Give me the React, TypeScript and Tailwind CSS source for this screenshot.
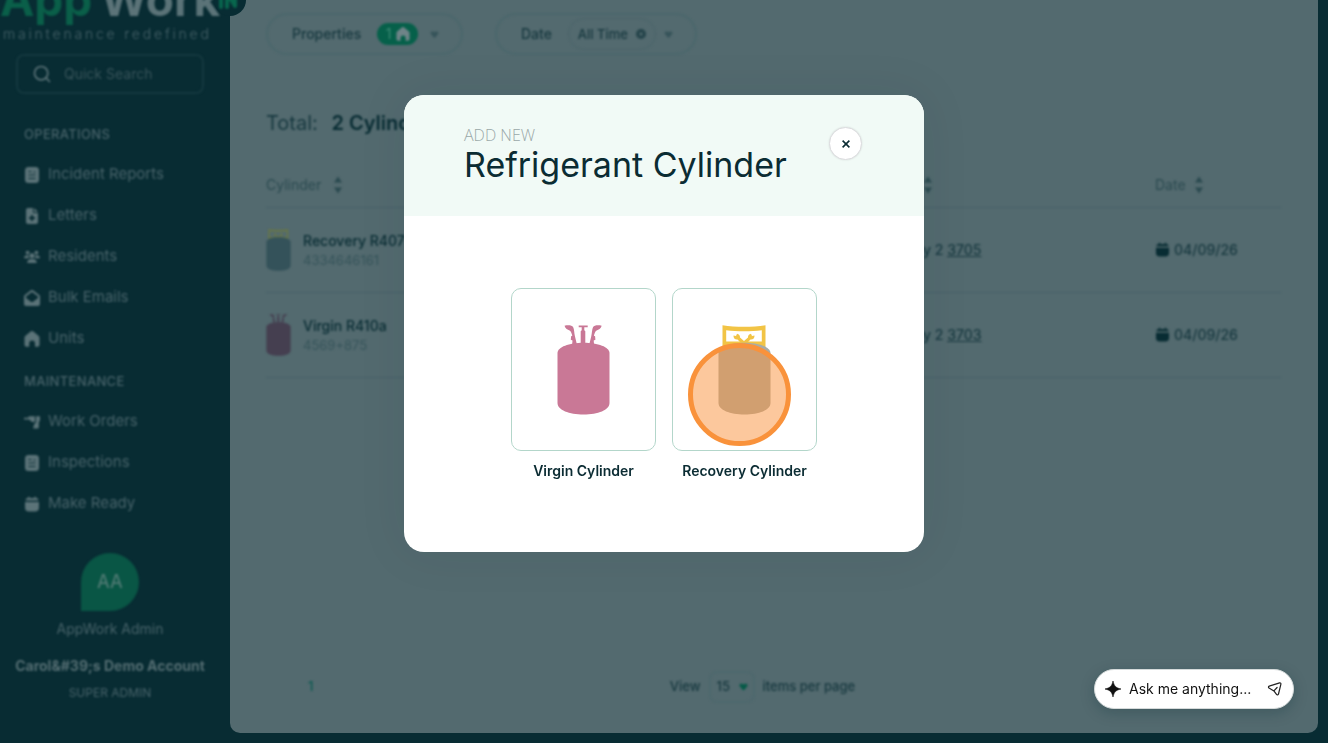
import React from 'react';
import { FaFileMedical, FaEnvelopeOpen } from 'react-icons/fa6';
import { Search } from 'lucide-react';

type IconProps = { className?: string };

function ReportIcon({ className }: IconProps) {
  return (
    <svg viewBox="0 0 16 16" className={className} aria-hidden="true">
      <rect x="1" y="0" width="14" height="16" rx="3.5" fill="currentColor" />
      <path d="M4.5 4.500h3M4.500 8h7M4.500 11.500h7M9.500 5h2" stroke="#082c33" strokeWidth="1.200" />
    </svg>
  );
}

function PeopleIcon({ className }: IconProps) {
  return (
    <svg viewBox="0 0 16 16" className={className} fill="currentColor" aria-hidden="true">
      <circle cx="3.6" cy="3.6" r="1.9" />
      <circle cx="12.4" cy="3.6" r="1.9" />
      <circle cx="8" cy="6.8" r="2.5" />
      <path d="M0 9.2C0 7.2 1.6 6.2 4.6 6.4 4.4 7.8 4.8 8.6 5.4 9.2ZM16 9.2c0-2-1.6-3-4.6-2.8.2 1.4-.2 2.2-.8 2.8ZM3.2 14c0-2.600 1.600-4 4.800-4s4.800 1.400 4.800 4Z" />
    </svg>
  );
}

function HomeIcon({ className }: IconProps) {
  return (
    <svg viewBox="0 0 16 16" className={className} fill="currentColor" aria-hidden="true">
      <path d="M6.700.5a2 2 0 0 1 2.600 0l5.500 4.600c.5.400.7.900.7 1.500v7.200c0 1.200-.8 2-2 2h-2.500v-3.300a2.900 2.900 0 0 0-5.800 0v3.300H2.500c-1.200 0-2-.8-2-2V6.600c0-.6.200-1.100.7-1.500Z" />
    </svg>
  );
}

function DrillIcon({ className }: IconProps) {
  return (
    <svg viewBox="0 0 16 16" className={className} fill="currentColor" aria-hidden="true">
      <path d="M0 3.800h4L5 2.200h6V8H8L5 5.600H0ZM12 2.200h4V6.500l-1.200 1.500v5.500c0 .6-.3 1-.9 1H10c-.6 0-1-.4-.8-1L10.700 9H12Z" />
    </svg>
  );
}

function CalendarIcon({ className }: IconProps) {
  return (
    <svg viewBox="0 0 16 16" className={className} fill="currentColor" aria-hidden="true">
      <path d="M1.500 4.500C1.500 2.800 2.500 2 4 2V.8h1.600V2h4.800V.8H12V2c1.500 0 2.500.8 2.500 2.500ZM1 6h14v5.500c0 2.700-1.300 4-4 4H5c-2.700 0-4-1.300-4-4Z" />
    </svg>
  );
}

function SortIcon() {
  return (
    <svg viewBox="0 0 10 18" className="h-[18px] w-[10px] text-[#2b4a50]" fill="currentColor" aria-hidden="true">
      <path d="M5 .5 9 6.500H1ZM5 17.500 1 11.500h8Z" />
    </svg>
  );
}

function Caret({ className }: IconProps) {
  return (
    <svg viewBox="0 0 10 8" className={className} fill="currentColor" aria-hidden="true">
      <path d="M2.500.5C3.500.5 4.500 1 5 1c.5 0 1.500-.5 2.500-.5 1.800 0 2.600 1.600 1.500 2.900L6.300 6.900c-.7.900-1.900.9-2.600 0L1 3.400C-.1 2.100.7.5 2.500.5Z" />
    </svg>
  );
}

const BODY = 'M.5 28C.5 22 12 17.700 26.500 17.700S52.500 22 52.500 28V78C52.500 85 41 89.500 26.500 89.500S.5 85 .5 78Z';

function VirginCylinder({ className }: IconProps) {
  return (
    <svg viewBox="0 0 53 90" className={className} fill="currentColor" aria-hidden="true">
      <path d={BODY} />
      <path d="M7.500.8C11 0 15 .2 16.200 2.200c1 1.700 1 6 1.800 9.300L19.800 19h-4.600l.3-3.400-1.700-.8.300-3.600 1.200-.4C14.600 8 14 6.500 12.600 5.500 10.500 4.500 8.500 4 7.500.8Z" />
      <path d="M44.700.8C41.200 0 37.200.2 36 2.200c-1 1.700-1 6-1.800 9.300L32.400 19h4.600l-.3-3.400 1.700-.8-.3-3.600-1.200-.4c.7-2.800 1.300-4.300 2.700-5.300 2.100-1 4.100-1.500 5.100-4.700Z" />
      <path d="M21.700.6h9v1.600h-3.400v3l1 1V19h-4.600V6.200l1-1v-3h-3Z" />
    </svg>
  );
}

function RecoveryCylinder({ className, frame }: { className?: string; frame: string }) {
  return (
    <svg viewBox="0 0 53 90" className={className} aria-hidden="true">
      <g fill={frame}>
        <path
          fillRule="evenodd"
          d="M4.500.2C18 2.200 34 2.200 47.500.2V26h-43ZM8.200 5.200V16.500H43.800V5.200C33 6.500 19 6.500 8.200 5.200Z"
        />
        <path d="M15.500 10.500 18 11l1-2.300c2 .3 3.200 1.800 3 3.800L26 16l4-3.500c-.2-2 1-3.500 3-3.800L34 11l2.500-.5c.3 2.500-1.500 4.300-4 4L28.500 18.500h-5L19.500 14.500c-2.500.3-4.300-1.500-4-4Z" />
      </g>
      <path d={BODY} fill="currentColor" />
    </svg>
  );
}

type Item = { label: string; Icon: React.ComponentType<IconProps> };

const operations: Item[] = [
  { label: 'Incident Reports', Icon: ReportIcon },
  { label: 'Letters', Icon: FaFileMedical },
  { label: 'Residents', Icon: PeopleIcon },
  { label: 'Bulk Emails', Icon: FaEnvelopeOpen },
  { label: 'Units', Icon: HomeIcon },
];

const maintenance: Item[] = [
  { label: 'Work Orders', Icon: DrillIcon },
  { label: 'Inspections', Icon: ReportIcon },
  { label: 'Make Ready', Icon: CalendarIcon },
];

function NavGroup({ title, items }: { title: string; items: Item[] }) {
  return (
    <section>
      <h2 className="pl-6 text-[13px] leading-5 font-medium tracking-wide text-[#48636a]">{title}</h2>
      <ul className="mt-[10px]">
        {items.map(({ label, Icon }) => (
          <li key={label}>
            <a href="#" className="flex h-[41px] items-center gap-2 pl-6 text-[15px] text-[#48636a]">
              <Icon className="h-4 w-4 text-[#5b7378]" />
              {label}
            </a>
          </li>
        ))}
      </ul>
    </section>
  );
}

function Sidebar() {
  return (
    <aside className="flex w-[230px] shrink-0 flex-col blur-[1px]">
      <div className="-mt-[30px] text-[46px] leading-[58px] font-bold whitespace-nowrap text-[#5b7378]">
        <span className="mr-2 text-[#0a5f49]">App</span>Work
      </div>
      <p className="pl-[3px] text-sm leading-3 font-light tracking-[0.2em] whitespace-nowrap text-[#48636a]">
        maintenance redefined
      </p>
      <label className="mx-4 mt-[14px] flex h-10 w-[188px] items-center gap-3 rounded-lg border-2 border-[#14383f] pl-[14px]">
        <Search className="h-5 w-5 shrink-0 text-[#5b7378]" />
        <input
          type="search"
          aria-label="Quick Search"
          placeholder="Quick Search"
          className="w-full min-w-0 bg-transparent text-sm text-[#48636a] outline-none placeholder:text-[#38545a]"
        />
      </label>
      <nav className="mt-[30px] flex flex-col gap-3">
        <NavGroup title="OPERATIONS" items={operations} />
        <NavGroup title="MAINTENANCE" items={maintenance} />
      </nav>
      <div className="mt-[29px] flex w-[220px] flex-col items-center text-[#48636a]">
        <div className="flex h-[58px] w-[58px] items-center justify-center rounded-full rounded-bl-none bg-[#095645] text-lg font-medium text-[#4f7a73]">
          AA
        </div>
        <p className="mt-2 text-sm leading-5">AppWork Admin</p>
        <p className="mt-[17px] text-sm leading-5 font-bold whitespace-nowrap text-[#546d72]">Carol&amp;#39;s Demo Account</p>
        <p className="mt-[7px] text-xs leading-5">SUPER ADMIN</p>
      </div>
    </aside>
  );
}

function Filters() {
  return (
    <div className="flex gap-8 text-sm font-medium text-[#17383f]">
      <button className="flex h-[42px] w-[197px] items-center rounded-full border-2 border-[#4b676c] pl-6">
        Properties
        <span className="ml-4 flex h-[22px] w-[41px] items-center justify-center gap-1 rounded-full bg-[#06604a] text-[#6f8488]">
          <span className="font-normal text-[#3e8a75]">1</span>
          <HomeIcon className="h-[14px] w-[14px]" />
        </span>
        <Caret className="ml-3 h-[7px] w-[9px] text-[#36545a]" />
      </button>
      <button className="flex h-[42px] w-[202px] items-center rounded-full border-2 border-[#4b676c] pl-6">
        Date
        <span className="ml-4 flex h-8 w-[88px] items-center justify-center gap-2 rounded-full border border-[#4b646a] text-[13px]">
          All Time
          <svg viewBox="0 0 10 10" className="h-[10px] w-[10px]" aria-hidden="true">
            <circle cx="5" cy="5" r="5" fill="#25444a" />
            <path d="m3.400 3.400 3.200 3.200M6.600 3.400 3.400 6.600" stroke="#5b7378" strokeWidth="1" />
          </svg>
        </span>
        <Caret className="ml-2 h-[7px] w-[9px] text-[#36545a]" />
      </button>
    </div>
  );
}

const rows = [
  { kind: 'recovery', name: 'Recovery R407', serial: '4334646161', unit: '3705', date: '04/09/26' },
  { kind: 'virgin', name: 'Virgin R410a', serial: '4569+875', unit: '3703', date: '04/09/26' },
];

function CylinderTable() {
  return (
    <table className="mt-[26px] w-full table-fixed border-collapse text-left text-sm text-[#17383f]">
      <thead>
        <tr className="h-[43px] border-b border-[#48626a] text-[#2b4a50]">
          <th className="font-normal">
            <span className="flex items-center gap-3">Cylinder <SortIcon /></span>
          </th>
          <th className="w-[232px] font-normal" aria-label="Location">
            <SortIcon />
          </th>
          <th className="w-[126px] font-normal">
            <span className="flex items-center gap-2">Date <SortIcon /></span>
          </th>
        </tr>
      </thead>
      <tbody>
        {rows.map((row) => (
          <tr key={row.serial} className="h-[85px] border-b border-[#48626a]">
            <td>
              <div className="flex items-center gap-3">
                {row.kind === 'virgin' ? (
                  <VirginCylinder className="h-[42px] w-[25px] text-[#453f50]" />
                ) : (
                  <RecoveryCylinder className="h-[42px] w-[25px] text-[#34525a]" frame="#66754a" />
                )}
                <div>
                  <p className="leading-5 font-medium text-[#082c33]">{row.name}</p>
                  <p className="text-[13px] leading-[18px] text-[#36545a]">{row.serial}</p>
                </div>
              </div>
            </td>
            <td className="font-medium">
              y 2 <a href="#" className="underline">{row.unit}</a>
            </td>
            <td>
              <span className="flex items-center gap-1 font-medium">
                <CalendarIcon className="h-[15px] w-[15px] text-[#082c33]" />
                {row.date}
              </span>
            </td>
          </tr>
        ))}
      </tbody>
    </table>
  );
}

function Pagination() {
  return (
    <footer className="mt-auto mb-[30px] grid grid-cols-3 items-center pr-[22px] text-[13px] font-medium text-[#17383f]">
      <a href="#" className="pl-[42px] text-[#0b5a50]">1</a>
      <div className="flex items-center justify-center gap-2 whitespace-nowrap">
        <label htmlFor="page-size">View</label>
        <span className="relative flex items-center">
          <select
            id="page-size"
            defaultValue="15"
            className="h-8 w-[46px] appearance-none rounded-lg border-2 border-[#4e686d] bg-transparent pl-1.5 outline-none"
          >
            <option value="15">15</option>
          </select>
          <Caret className="pointer-events-none absolute right-[7px] h-2 w-[9px] text-[#075a48]" />
        </span>
        <span>items per page</span>
      </div>
    </footer>
  );
}

function TypeCard({ label, children }: { label: string; children: React.ReactNode }) {
  return (
    <button className="flex w-[145px] flex-col items-center">
      <span className="relative flex h-[163px] w-full items-center justify-center rounded-[10px] border border-[#b3d6ca]">
        {children}
      </span>
      <span className="mt-[10px] text-sm leading-5 font-semibold whitespace-nowrap text-[#0b2c33]">{label}</span>
    </button>
  );
}

function AddCylinderDialog() {
  return (
    <div className="fixed inset-0 flex items-start justify-center px-4 pt-[95px]">
      <div
        role="dialog"
        aria-labelledby="dialog-title"
        className="w-full max-w-[520px] overflow-hidden rounded-[20px] bg-white shadow-[0_0_50px_rgba(8,44,51,0.08)]"
      >
        <header className="flex h-[121px] items-start justify-between bg-[#f1faf6] pt-8 pr-[62px] pl-[60px]">
          <div>
            <p className="font-['Open_Sans'] text-base leading-[17px] font-light text-[#9aa8a8]">ADD NEW</p>
            <h1 id="dialog-title" className="text-[34px] leading-[42px] font-normal whitespace-nowrap text-[#0b2c33]">
              Refrigerant Cylinder
            </h1>
          </div>
          <button
            aria-label="Close"
            className="flex h-[33px] w-[33px] items-center justify-center rounded-full border border-[#dcdcdf] bg-white shadow-[0_0_2px_rgba(0,0,0,0.12)]"
          >
            <svg viewBox="0 0 8 8" className="h-2 w-2" aria-hidden="true">
              <path d="m.6.6 6.800 6.800M7.400.6.6 7.400" stroke="#0b2c33" strokeWidth="1.600" />
            </svg>
          </button>
        </header>
        <div className="flex justify-center gap-4 pt-[72px] pb-[71px]">
          <TypeCard label="Virgin Cylinder">
            <VirginCylinder className="h-[90px] w-[53px] text-[#c97896]" />
          </TypeCard>
          <TypeCard label="Recovery Cylinder">
            <RecoveryCylinder className="h-[90px] w-[53px] text-[#a9aca5]" frame="#f2c445" />
            <span className="absolute top-[54px] left-[15px] h-[103px] w-[103px] rounded-full border-[5px] border-[#f9923b] bg-[#f9923b]/50" />
          </TypeCard>
        </div>
      </div>
    </div>
  );
}

function AskBar() {
  return (
    <form className="fixed right-[34px] bottom-[34px] flex h-10 w-[200px] items-center gap-2 rounded-full border border-[#d5dada] bg-white px-[10px] shadow-[0_4px_14px_rgba(8,44,51,0.25)]">
      <svg viewBox="0 0 16 16" className="h-4 w-4 shrink-0" aria-hidden="true">
        <path d="M8 0C9 5 11 7 16 8 11 9 9 11 8 16 7 11 5 9 0 8 5 7 7 5 8 0Z" fill="#111" stroke="#111" strokeWidth=".6" />
      </svg>
      <input
        aria-label="Ask me anything"
        placeholder="Ask me anything..."
        className="w-full min-w-0 bg-transparent text-sm text-black outline-none placeholder:text-[#111]"
      />
      <button type="button" aria-label="Send" className="shrink-0">
        <svg viewBox="0 0 16 16" className="h-4 w-4" fill="none" stroke="#222" strokeWidth="1.200" strokeLinejoin="round" strokeLinecap="round" aria-hidden="true">
          <path d="M2.200 5.100 12.600 1.900c.9-.2 1.500.4 1.300 1.300L11.500 13c-.2 1-1.400 1.200-2 .4L6.900 9.900 2 7C1.200 6.500 1.300 5.400 2.200 5.100ZM6.900 9.900l3.200-3.400" />
        </svg>
      </button>
    </form>
  );
}

export default function App() {
  return (
    <div className="min-h-screen overflow-hidden bg-[#082c33] font-['Inter','Liberation_Sans',sans-serif]">
      <div className="relative flex min-h-screen">
        <Sidebar />
        <main className="mr-[10px] mb-[10px] flex min-w-0 grow rounded-b-[10px] bg-[#536a6f] pt-[13px] pr-[37px] pl-9">
          <div className="flex min-w-0 grow flex-col blur-[1px]">
            <Filters />
            <h2 className="mt-[53px] text-xl leading-[30px] whitespace-nowrap text-[#17383f]">
              Total: <span className="ml-2 font-semibold text-[#082c33]">2 Cylinders</span>
            </h2>
            <CylinderTable />
            <Pagination />
          </div>
        </main>
        <div className="absolute -top-4 left-[214px] h-8 w-8 rounded-full bg-[#082c33]">
          <svg viewBox="0 0 32 32" className="h-8 w-8 blur-[1px]" fill="none" stroke="#08664d" strokeWidth="4" strokeLinecap="round" strokeLinejoin="round" aria-hidden="true">
            <path d="M7 8v15M13 23V9l8 13V9" />
          </svg>
        </div>
      </div>
      <AddCylinderDialog />
      <AskBar />
    </div>
  );
}
